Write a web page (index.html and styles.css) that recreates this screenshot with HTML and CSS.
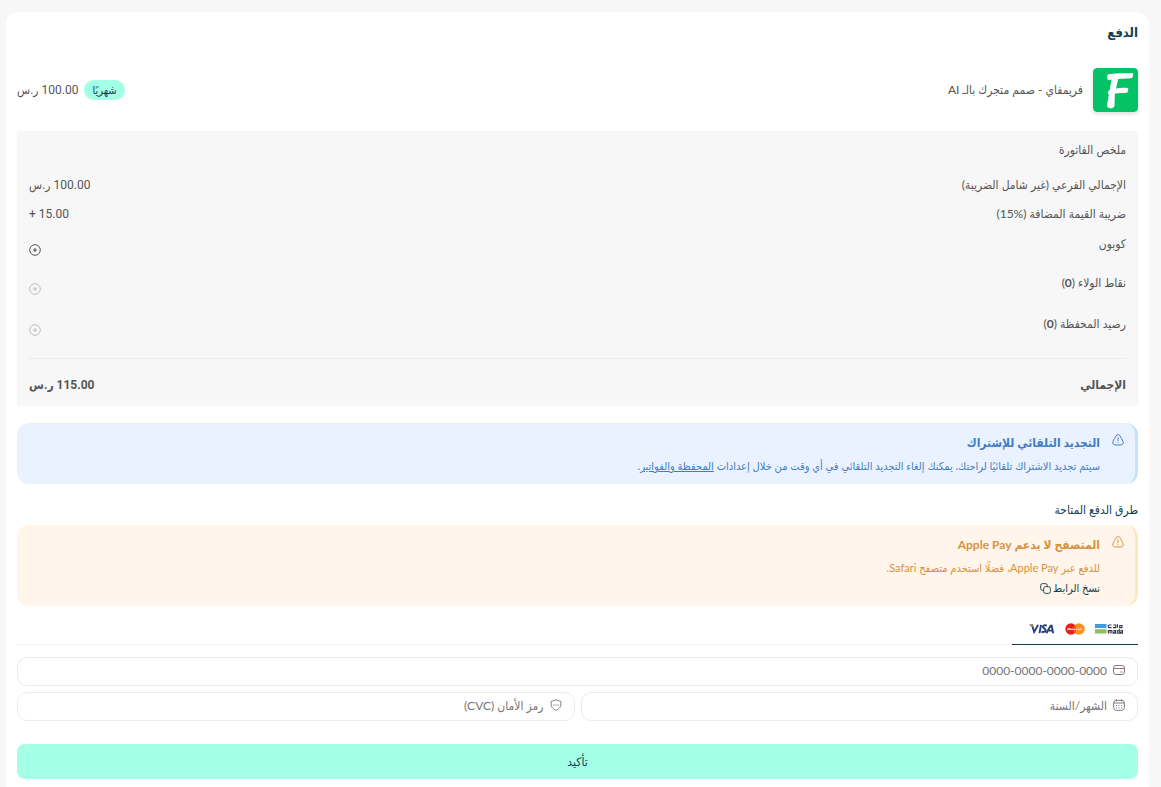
FILE: index.html
```html
<!DOCTYPE html>
<html lang="ar" dir="rtl">
<head>
<meta charset="utf-8">
<meta name="viewport" content="width=device-width, initial-scale=1">
<title>الدفع</title>
<link rel="stylesheet" href="styles.css">
</head>
<body>
<svg class="sprite" aria-hidden="true">
  <symbol id="plus" viewBox="0 0 12 12"><circle cx="6" cy="6" r="5.300"/><path d="M6 4v4M4 6h4"/></symbol>
  <symbol id="warning" viewBox="0 0 12 12"><path d="M4.200 1.600c.9-1.300 2.700-1.300 3.600 0 1.300 1.900 2.500 4 3.300 6.200.5 1.500-.2 2.800-1.700 3-2.300.3-4.500.3-6.800 0-1.500-.2-2.200-1.500-1.700-3C1.700 5.600 2.900 3.500 4.200 1.600z"/><path d="M6 3.500v3.500M6 8v.9"/></symbol>
</svg>
<main class="card">
  <h1 class="title">الدفع</h1>
  <section class="product">
    <svg class="logo" viewBox="0 0 45 44" role="img" aria-label="فريمفاي">
      <rect width="45" height="44" rx="4" fill="#05c267"/>
      <path fill="#fff" d="M14.800 6.500C20 4.700 32 5.400 39.500 4.900c1.200.5.6 4.300-.7 5.200-4 .7-9 .6-13.600.8l-2.200 9.500c3.500-.6 7.300-1 11.800-.5 1 1 .4 3.800-.8 4.900-4 .3-8.300.2-12.200.9L21.500 38c-1 2.400-4.600 3-6.700 1.500-1.500-1.600.2-8 1.100-13-1.700-.8-1-3.700.8-4.600l1.800-10.300c-1.700.2-2.600 1-3.600.2-1.100-1.400-1.100-4.100-.1-5.300z"/>
    </svg>
    <h2 class="product-name">فريمفاي - صمم متجرك بالـ AI</h2>
    <span class="badge">شهريًا</span>
    <span class="price">100.00 ر.س</span>
  </section>

  <section class="summary">
    <h2 class="summary-title">ملخص الفاتورة</h2>
    <dl class="lines">
      <div class="line"><dt>الإجمالي الفرعي (غير شامل الضريبة)</dt><dd class="price">100.00 ر.س</dd></div>
      <div class="line"><dt>ضريبة القيمة المضافة (<bdi dir="ltr">15%</bdi>)</dt><dd class="price" dir="ltr">+ 15.00</dd></div>
      <div class="line extra coupon"><dt>كوبون</dt><dd><button class="add" type="button" aria-label="إضافة كوبون"><svg><use href="#plus"/></svg></button></dd></div>
      <div class="line extra"><dt>نقاط الولاء (<b>0</b>)</dt><dd><button class="add" type="button" disabled aria-label="استخدام نقاط الولاء"><svg><use href="#plus"/></svg></button></dd></div>
      <div class="line extra"><dt>رصيد المحفظة (<b>0</b>)</dt><dd><button class="add" type="button" disabled aria-label="استخدام رصيد المحفظة"><svg><use href="#plus"/></svg></button></dd></div>
      <div class="line total"><dt>الإجمالي</dt><dd class="price">115.00 ر.س</dd></div>
    </dl>
  </section>

  <section class="alert info">
    <svg class="alert-icon"><use href="#warning"/></svg>
    <div>
      <h3>التجديد التلقائي للإشتراك</h3>
      <p>سيتم تجديد الاشتراك تلقائيًا لراحتك. يمكنك إلغاء التجديد التلقائي في أي وقت من خلال إعدادات <a href="#wallet">المحفظة والفواتير</a>.</p>
    </div>
  </section>

  <h2 class="methods-title">طرق الدفع المتاحة</h2>
  <section class="alert warn">
    <svg class="alert-icon"><use href="#warning"/></svg>
    <div>
      <h3>المتصفح لا يدعم Apple Pay</h3>
      <p>للدفع عبر Apple Pay، فضلًا استخدم متصفح Safari.</p>
      <button class="copy" type="button">نسخ الرابط
        <svg viewBox="0 0 12 12"><rect x="4" y="4" width="7.300" height="7.300" rx="2"/><path d="M4 8H2.700A2 2 0 0 1 .7 6V2.700a2 2 0 0 1 2-2H6a2 2 0 0 1 2 2V4"/></svg>
      </button>
    </div>
  </section>

  <div class="tabs" role="tablist">
    <button class="tab" type="button" role="tab" aria-selected="true" aria-label="مدى، ماستركارد، فيزا">
      <svg class="mada" viewBox="0 0 28 10">
        <path fill="#3f9be0" d="M0 0h11.500v4H0z"/><path fill="#8fbe5c" d="M0 5.200h11.500v4.300H0z"/>
        <g fill="none" stroke="#33384a" stroke-width="1.100"><path d="M16.500 1h-2.300q-1 0-1 1.300t1 1.300h2.300M18 3.600h2.800V1h-2.500M22.500.2v3.500M24 3.600h3V1.500h-2.200v2"/><path d="M13.300 9.500v-3h1.800v3-3h1.800v3M18.500 6.500h2v2.800h-2V8h2M24.300 5v4.300h-2V6.700h2M25.500 6.500h2v2.800h-2V8h2"/></g>
      </svg>
      <svg class="mastercard" viewBox="0 0 20 12">
        <circle cx="6" cy="6" r="5.700" fill="#f01c10"/><circle cx="14" cy="6" r="5.700" fill="#ff9016"/>
        <path d="M10 2a5.700 5.700 0 0 1 0 8a5.700 5.700 0 0 1 0-8z" fill="#f4561a"/>
        <path d="M2.500 7.300l.6-2.300 1 2 .9-2 .5 2.300M6.500 7V6h1.500v1M9 7l.8-1M11 5v2h1M13 6h1v1M15 7V6h2" fill="none" stroke="#fff" stroke-width=".8"/>
      </svg>
      <svg class="visa" viewBox="0 0 27 10">
        <g fill="none" stroke="#253f7f" stroke-width="2"><path d="M1 1h2.200l2.200 7L9.500.7M12.500.7l-1.600 8.600"/><path d="M18.500 1.500c-2-.8-4-.4-4.100 1.200 0 1.700 3 1.600 2.800 3.500-.2 2-2.500 2.300-4.300 1.500M18 9.400l4.500-7.900h1l1.600 7.900M20.500 6.700h4"/></g><path d="M0 0h3.200l1.200 3.200z" fill="#d9992f"/>
      </svg>
    </button>
  </div>

  <form class="form">
    <label class="field wide">
      <svg viewBox="0 0 12 12"><rect x=".5" y="1.500" width="11" height="9" rx="2.500"/><path d="M.5 4.500h11M7.500 8h2"/></svg>
      <input type="text" inputmode="numeric" dir="rtl" placeholder="0000-0000-0000-0000" aria-label="رقم البطاقة">
    </label>
    <label class="field">
      <svg viewBox="0 0 12 12"><rect x=".7" y="1.300" width="10.600" height="10" rx="2.500"/><path d="M.7 4h10.600M3.500.3v2M8.500.3v2M3 6.500h1M5.500 6.500h1M8 6.500h1M3 8.800h1M5.500 8.800h1M8 8.800h1"/></svg>
      <input type="text" placeholder="الشهر/السنة" aria-label="الشهر/السنة">
    </label>
    <label class="field">
      <svg viewBox="0 0 12 12"><path d="M6 .6c1.500 1 3 1.400 4.600 1.500.9 3.800.2 7-4.600 9.300C1.200 9.100.5 5.900 1.400 2.100 3 2 4.500 1.600 6 .6z"/><path d="M3.200 6h1.200M5.400 6h1.200M7.600 6h1.200"/></svg>
      <input type="text" inputmode="numeric" placeholder="رمز الأمان (CVC)" aria-label="رمز الأمان (CVC)">
    </label>
    <button class="submit" type="submit">تأكيد</button>
  </form>
</main>
</body>
</html>
```
FILE: styles.css
```css
* { box-sizing: border-box; }

body {
  margin: 0;
  padding: 12px 12px 0 6px;
  min-height: 100vh;
  display: flex;
  flex-direction: column;
  background: #f7f7f7;
  color: #555;
  font: 12px/20px Lato, "DejaVu Sans Condensed", "DejaVu Sans", sans-serif;
}

h1, h2, h3, p, dl, dd { margin: 0; }
h1, h2, h3 { font-size: 12px; font-weight: 400; }
button, input { font: inherit; color: inherit; }
button { padding: 0; border: 0; background: none; cursor: pointer; }
svg { display: block; flex: none; fill: none; stroke: currentColor; }
.sprite { position: absolute; width: 0; height: 0; }

.card {
  flex: 1;
  padding: 10px 11px 7px;
  border-radius: 12px 12px 0 0;
  background: #fff;
}

.title { color: #12404f; font-size: 13px; font-weight: 700; }

.product { display: flex; align-items: center; margin-top: 26px; }
.logo {
  width: 45px;
  height: 44px;
  margin-inline-end: 10px;
  border-radius: 4px;
  box-shadow: 0 2px 4px #0002;
  stroke: none;
}
.price { font-family: Roboto, "DejaVu Sans Condensed", "DejaVu Sans", sans-serif; }
.badge {
  margin-inline: auto 6px;
  padding: 0 8px;
  border-radius: 10px;
  background: #a3ffe6;
  color: #12404f;
  font-size: 11px;
}

.summary {
  margin-top: 19px;
  padding: 9px 12px 11px;
  border-radius: 3px;
  background: #f7f7f7;
}
.lines { padding-top: 15px; }
.line { display: flex; justify-content: space-between; height: 29px; }
.extra { height: 41px; align-items: flex-start; }
.coupon { height: 40px; padding-top: 1px; }
.add { display: block; margin-top: 10px; }
.add svg { width: 12px; height: 12px; stroke-width: 1; }
.add:disabled { opacity: .35; }
.total {
  height: auto;
  margin-top: 3px;
  padding-top: 16px;
  border-top: 1px solid #ececec;
  font-weight: 700;
}

.alert {
  display: flex;
  gap: 12px;
  margin-top: 17px;
  padding: 10px 11px 8px;
  border-radius: 12px;
  border-inline-start: 3px solid;
}
.alert h3 { font-weight: 700; }
.alert p { padding-top: 3px; font-size: 11px; }
.alert-icon { width: 12px; height: 12px; margin-top: 1px; }
.info { border-color: #c5e3f8; background: #ebf2ff; color: #427cc4; }
.info a { color: inherit; }
.warn { margin-top: 5px; border-color: #fde9bf; background: #fff5ea; color: #d8923f; }
.copy { display: flex; align-items: center; gap: 2px; color: #12404f; font-size: 11px; }
.copy svg { width: 11px; height: 11px; }

.methods-title { margin-top: 16px; color: #12404f; }

.tabs { display: flex; margin-top: 8px; border-bottom: 1px solid #f3f3f3; }
.tab {
  display: flex;
  align-items: center;
  gap: 10px;
  height: 31px;
  margin-bottom: -1px;
  padding: 0 15px 0 17px;
  border-bottom: 1px solid #12404f;
}
.tab svg { stroke: none; }
.mada { width: 28px; height: 10px; }
.mastercard { width: 20px; height: 12px; }
.visa { width: 26px; height: 10px; }

.form { display: grid; grid-template-columns: 1fr 1fr; gap: 6px; margin-top: 12px; }
.field {
  display: flex;
  align-items: center;
  gap: 6px;
  height: 29px;
  padding: 0 12px 2px;
  border: 1px solid #ebebeb;
  border-radius: 10px;
  color: #85797f;
}
.field svg { width: 12px; height: 12px; margin-bottom: 1px; }
.field input { flex: 1; min-width: 0; padding: 0; border: 0; outline: 0; background: none; }
.field input::placeholder { color: #757575; opacity: 1; }
.wide, .submit { grid-column: 1 / -1; }
.submit {
  height: 35px;
  margin-top: 17px;
  border-radius: 8px;
  background: #a3ffe6;
  color: #12404f;
}
```
